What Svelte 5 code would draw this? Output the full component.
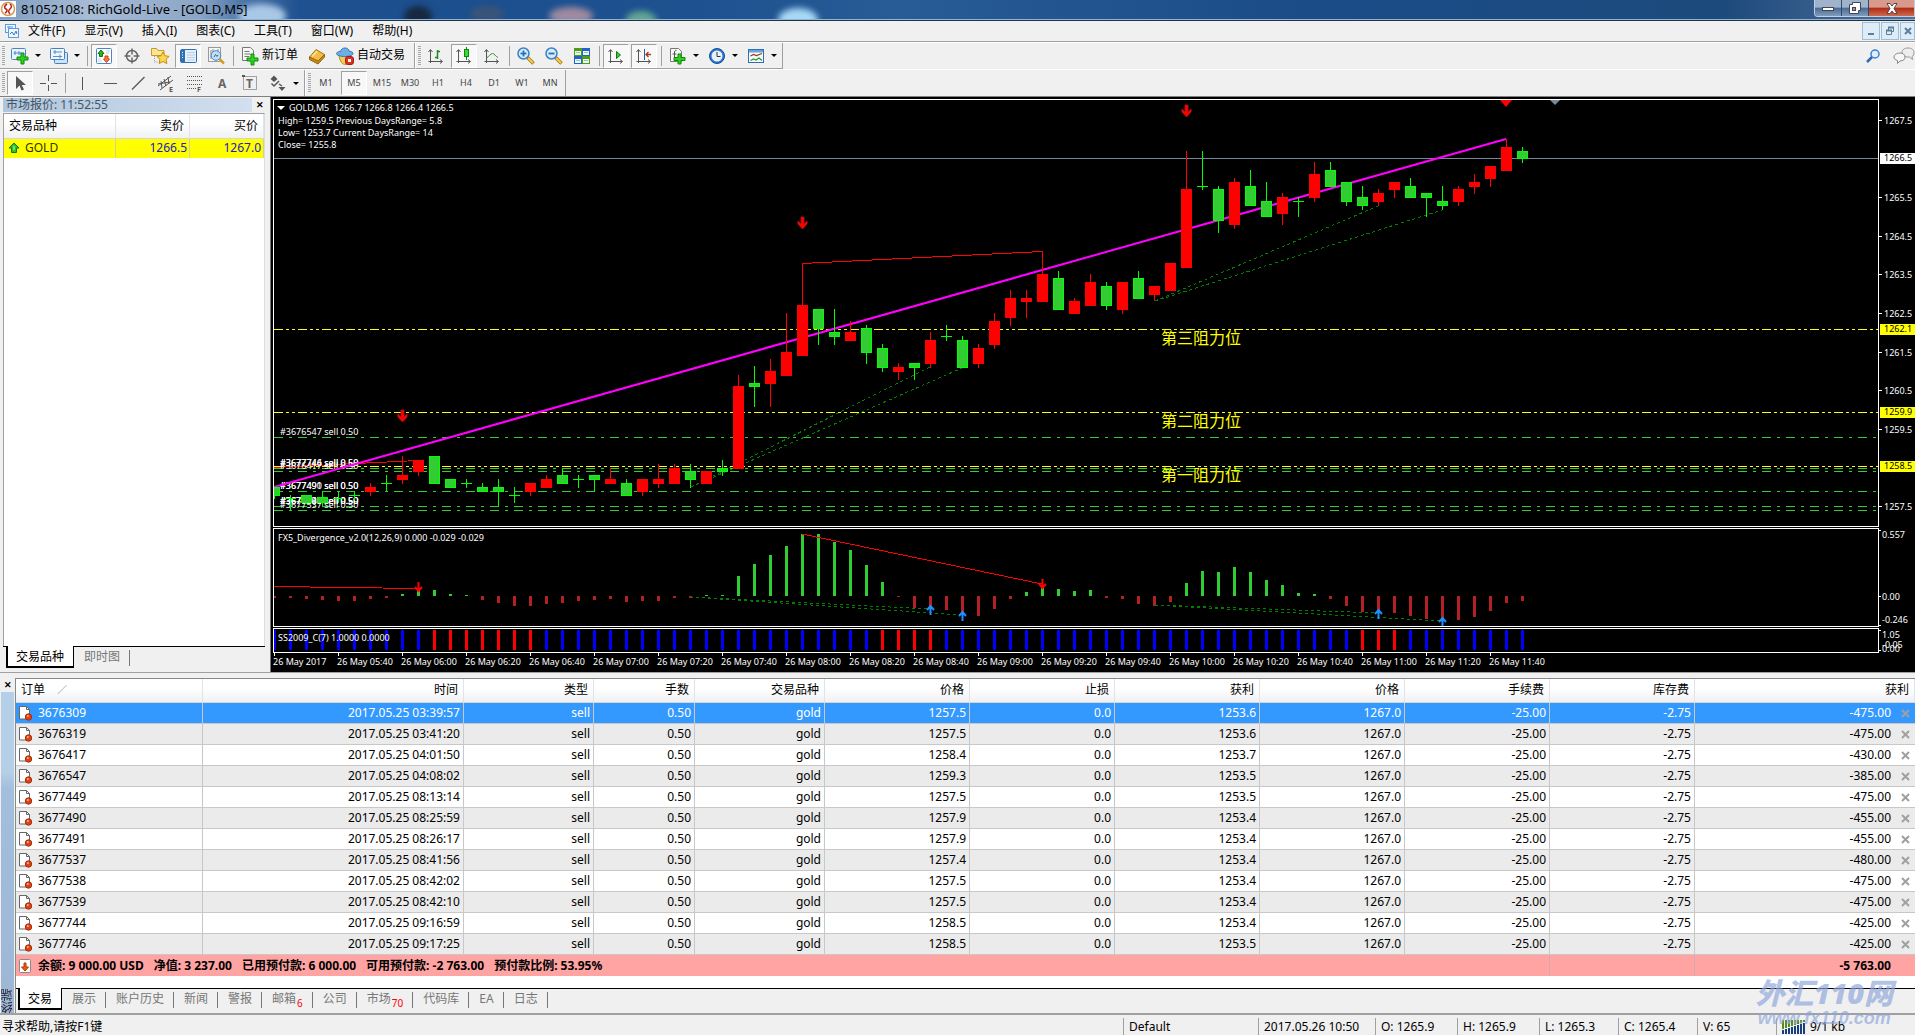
<script lang="ts">
  type Tool = { icon: string; label: string; pressed?: boolean; menu?: boolean; text?: string };

  const menus = ['文件(F)', '显示(V)', '插入(I)', '图表(C)', '工具(T)', '窗口(W)', '帮助(H)'];

  const standard: Tool[][] = [
    [
      { icon: 'newchart', label: '新图表', menu: true },
      { icon: 'profiles', label: '配置文件', menu: true },
    ],
    [
      { icon: 'watch', label: '市场报价', pressed: true },
      { icon: 'target', label: '数据窗口' },
      { icon: 'star', label: '收藏夹' },
      { icon: 'navigator', label: '导航', pressed: true },
      { icon: 'tester', label: '策略测试' },
    ],
    [
      { icon: 'order', label: '新订单', text: '新订单' },
      { icon: 'book', label: 'MetaEditor' },
      { icon: 'auto', label: '自动交易', text: '自动交易' },
    ],
  ];
  const charting: Tool[][] = [
    [
      { icon: 'bars', label: '柱状图' },
      { icon: 'candles', label: '阴阳烛', pressed: true },
      { icon: 'line', label: '折线图' },
    ],
    [
      { icon: 'zoomin', label: '放大' },
      { icon: 'zoomout', label: '缩小' },
      { icon: 'tile', label: '平铺窗口' },
    ],
    [
      { icon: 'scroll', label: '自动滚动', pressed: true },
      { icon: 'shift', label: '图表平移', pressed: true },
    ],
    [
      { icon: 'indicator', label: '技术指标', menu: true },
      { icon: 'clock', label: '时间周期', menu: true },
      { icon: 'template', label: '模板', menu: true },
    ],
  ];
  const drawing: Tool[][] = [
    [
      { icon: 'cursor', label: '光标', pressed: true },
      { icon: 'cross', label: '十字准线' },
    ],
    [
      { icon: 'vline', label: '垂直线' },
      { icon: 'hline', label: '水平线' },
      { icon: 'trend', label: '趋势线' },
      { icon: 'channel', label: '通道' },
      { icon: 'fibo', label: '斐波纳契' },
      { icon: 'text', label: '文字' },
      { icon: 'label', label: '文字标签' },
      { icon: 'arrows', label: '箭头', menu: true },
    ],
  ];
  const periods = ['M1', 'M5', 'M15', 'M30', 'H1', 'H4', 'D1', 'W1', 'MN'];

  // g = up colour / r = down colour; then high, low, body top, body bottom
  const candles: [string, number, number, number, number][] = [
    ['g', 487, 499, 487, 496], ['g', 495, 510, 498, 499], ['g', 495, 504, 495, 503], ['g', 491, 507, 497, 503],
    ['g', 491, 503, 498, 499], ['g', 491, 500, 495, 496], ['r', 483, 496, 487, 492], ['g', 475, 491, 483, 484],
    ['r', 456, 484, 475, 480], ['r', 460, 476, 460, 472], ['g', 456, 484, 456, 484], ['g', 479, 488, 479, 488],
    ['g', 479, 488, 483, 484], ['g', 483, 492, 487, 492], ['g', 479, 507, 487, 492], ['g', 487, 503, 495, 496],
    ['r', 483, 496, 483, 492], ['r', 475, 488, 479, 488], ['g', 468, 484, 475, 484], ['g', 475, 488, 479, 480],
    ['g', 475, 492, 475, 480], ['r', 468, 484, 479, 484], ['g', 479, 496, 483, 496], ['r', 479, 496, 479, 492],
    ['r', 464, 488, 479, 484], ['r', 464, 484, 468, 484], ['g', 464, 488, 471, 480], ['r', 471, 484, 471, 484],
    ['g', 460, 476, 468, 472], ['r', 375, 469, 386, 469], ['g', 366, 407, 383, 387], ['r', 359, 407, 371, 384],
    ['r', 313, 376, 352, 376], ['r', 263, 356, 305, 356], ['g', 309, 345, 309, 329], ['g', 309, 345, 332, 337],
    ['r', 321, 341, 332, 341], ['g', 325, 364, 328, 353], ['g', 344, 372, 348, 368], ['r', 363, 380, 367, 372],
    ['g', 363, 380, 363, 368], ['r', 332, 368, 340, 364], ['g', 325, 341, 336, 337], ['g', 336, 368, 340, 368],
    ['r', 344, 368, 348, 364], ['r', 313, 349, 321, 345], ['r', 290, 326, 298, 318], ['r', 290, 318, 298, 302],
    ['r', 251, 302, 274, 302], ['g', 271, 310, 278, 310], ['r', 298, 314, 301, 314], ['r', 274, 306, 282, 306],
    ['g', 282, 310, 286, 306], ['r', 282, 314, 282, 310], ['g', 271, 299, 278, 299], ['r', 286, 301, 286, 295],
    ['r', 263, 291, 263, 291], ['r', 151, 268, 189, 268], ['g', 151, 190, 186, 187], ['g', 186, 233, 189, 221],
    ['r', 178, 229, 182, 225], ['g', 170, 206, 186, 206], ['g', 182, 217, 201, 217], ['r', 193, 225, 197, 214],
    ['g', 197, 217, 201, 202], ['r', 162, 202, 174, 198], ['g', 162, 187, 170, 187], ['g', 182, 206, 182, 202],
    ['g', 186, 210, 197, 206], ['r', 189, 206, 193, 202], ['r', 182, 198, 182, 190], ['g', 178, 198, 186, 198],
    ['g', 193, 217, 193, 198], ['g', 186, 210, 201, 206], ['r', 186, 206, 189, 202], ['r', 174, 194, 182, 187],
    ['r', 166, 187, 166, 179], ['r', 139, 171, 147, 171], ['g', 147, 163, 151, 159],
  ];
  const histogram = [
    -2, -2, -3, -4, -5, -5, -3, -2, 2, 6, 6, 2, 1, -4, -7, -10, -10, -8, -7, -5, -4, -3, -6, -5, -5, -2, -2, 1, 1, 20,
    32, 41, 50, 62, 62, 54, 46, 31, 14, -1, -12, -13, -14, -17, -20, -13, -3, 4, 9, 7, 5, 6, -2, -3, -8, -10, -6, 13,
    25, 24, 29, 24, 16, 11, 3, 2, -3, -10, -16, -17, -17, -20, -23, -23, -24, -21, -15, -7, -5,
  ];
  const isRed = (i: number) => (i >= 10 && i <= 16) || (i >= 38 && i <= 41) || (i >= 68 && i <= 70);

  const resistances = [
    { y: 329, name: '第三阻力位' },
    { y: 412, name: '第二阻力位' },
    { y: 466, name: '第一阻力位' },
  ];
  const orderLines = [437, 468, 471, 491, 506, 510];
  const orderLabels: [number, string][] = [
    [437, '3676547'], [468, '3677744'], [468, '3677746'], [471, '3676417'], [491, '3677490'], [491, '3677491'],
    [506, '3676309'], [506, '3677449'], [506, '3677538'], [510, '3677537'],
  ];
  const prices = Array.from({ length: 11 }, (_, i) => ({ y: Math.round(120 + i * 38.6), v: (1267.5 - i).toFixed(1) }))
    .filter((p) => p.v !== '1266.5' && p.v !== '1258.5');
  const marks = [
    { y: 158, v: '1266.5', now: true },
    { y: 329, v: '1262.1', now: false },
    { y: 412, v: '1259.9', now: false },
    { y: 466, v: '1258.5', now: false },
  ];
  const times = Array.from({ length: 20 }, (_, k) => {
    if (k === 0) return '26 May 2017';
    const m = 340 + (k - 1) * 20;
    return `26 May ${String(Math.floor(m / 60)).padStart(2, '0')}:${String(m % 60).padStart(2, '0')}`;
  });

  const columns = ['时间', '类型', '手数', '交易品种', '价格', '止损', '获利', '价格', '手续费', '库存费'];
  const raw: [string, string, string, string, string][] = [
    ['3676309', '03:39:57', '1257.5', '1253.6', '-475.00'],
    ['3676319', '03:41:20', '1257.5', '1253.6', '-475.00'],
    ['3676417', '04:01:50', '1258.4', '1253.7', '-430.00'],
    ['3676547', '04:08:02', '1259.3', '1253.5', '-385.00'],
    ['3677449', '08:13:14', '1257.5', '1253.5', '-475.00'],
    ['3677490', '08:25:59', '1257.9', '1253.4', '-455.00'],
    ['3677491', '08:26:17', '1257.9', '1253.4', '-455.00'],
    ['3677537', '08:41:56', '1257.4', '1253.4', '-480.00'],
    ['3677538', '08:42:02', '1257.5', '1253.4', '-475.00'],
    ['3677539', '08:42:10', '1257.5', '1253.4', '-475.00'],
    ['3677744', '09:16:59', '1258.5', '1253.4', '-425.00'],
    ['3677746', '09:17:25', '1258.5', '1253.5', '-425.00'],
  ];
  const orders = raw.map(([id, t, open, tp, profit]) => ({
    id,
    profit,
    cells: [`2017.05.25 ${t}`, 'sell', '0.50', 'gold', open, '0.0', tp, '1267.0', '-25.00', '-2.75'],
  }));

  const tabs: { name: string; count?: string }[] = [
    { name: '交易' }, { name: '展示' }, { name: '账户历史' }, { name: '新闻' }, { name: '警报' },
    { name: '邮箱', count: '6' }, { name: '公司' }, { name: '市场', count: '70' }, { name: '代码库' },
    { name: 'EA' }, { name: '日志' },
  ];

  let selected = $state('3676309');
  let activeTab = $state('交易');
  let period = $state('M5');
</script>

{#snippet glyph(name: string)}
  <svg class="glyph" width="20" height="20" viewBox="0 0 20 20" aria-hidden="true">
    {#if name === 'newchart'}
      <rect x="1.500" y="2.500" width="14" height="11" rx="1" fill="#eaf4ff" stroke="#4a86c5" />
      <path d="M5 9V5M3.500 7h8M9 5v4" stroke="#4a86c5" fill="none" />
      <path d="M11 7h3v4h4v3h-4v4h-3v-4H7v-3h4z" fill="#2fd01f" stroke="#0c8a0c" />
    {:else if name === 'profiles'}
      <rect x="5.500" y="6.500" width="13" height="11" rx="1" fill="#cfe3f8" stroke="#4a7fb8" />
      <rect x="1.500" y="2.500" width="14" height="11" rx="1" fill="#eef6ff" stroke="#4a7fb8" />
      <path d="M4 6h9M6 4v4M4 10.500h9M11 8.500v4" stroke="#5a8fc8" fill="none" />
    {:else if name === 'watch'}
      <rect x="2.500" y="2.500" width="15" height="15" rx="1" fill="#fff" stroke="#4a86c5" />
      <path d="M7 4l3 3.500H8.500v3h-3v-3H4z" fill="#27b627" stroke="#0d7a0d" />
      <path d="M12.500 16.500l3-3.500H14v-3h-3v3H9.500z" fill="#ff7b3a" stroke="#d23c0c" />
      <path d="M12 5h4M12 7h3M4 13h3M4 15h4" stroke="#c3d5e8" />
    {:else if name === 'target'}
      <circle cx="10" cy="10" r="5.500" fill="none" stroke="#666" stroke-width="1.500" />
      <path d="M10 2.500v6M10 11.500v6M2.500 10h6M11.500 10h6" stroke="#666" stroke-width="1.500" />
    {:else if name === 'star'}
      <path d="M1.500 2.500h5l1.500 2h6v5H1.500z" fill="#fbe596" stroke="#c99a2a" />
      <path d="M4.500 10v6h4" fill="none" stroke="#999" stroke-dasharray="1 1" />
      <path d="M13 6l1.900 3.800 4.200.6-3 2.900.7 4.200-3.800-2-3.800 2 .7-4.200-3-2.900 4.200-.6z" fill="#ffd84a" stroke="#c68a12" />
    {:else if name === 'navigator'}
      <rect x="2.500" y="3.500" width="16" height="13" rx="1" fill="#e6f1fc" stroke="#2f6fb3" />
      <rect x="3" y="4" width="4" height="12" fill="#2f6fb3" />
      <path d="M9 6.500h8M9 9h8M9 11.500h8M9 14h8" stroke="#b8cfe8" />
      <path d="M4 6.500h1M4 9h1M4 11.500h1" stroke="#fff" />
    {:else if name === 'tester'}
      <rect x="2.500" y="1.500" width="12" height="14" fill="#f6f6f6" stroke="#999" />
      <path d="M5 4v9M12 3v7M7 3v3" stroke="#7a8794" />
      <circle cx="10" cy="9.500" r="4.800" fill="#b9dcf8" fill-opacity=".85" stroke="#4a86c5" />
      <path d="M8 11l1.500-2.500 1.500 2 1-1.500" fill="none" stroke="#467" />
      <path d="M13.500 13l4.500 4.500" stroke="#d99a1e" stroke-width="2.500" />
    {:else if name === 'order'}
      <path d="M2.500 1.500h8l3 3v10h-11z" fill="#f6f6f6" stroke="#777" />
      <path d="M4.500 5.500h5M4.500 8h6M4.500 10.500h5" stroke="#777" />
      <path d="M11 8h3v4h4v3h-4v4h-3v-4H7v-3h4z" fill="#2fd01f" stroke="#0c8a0c" />
    {:else if name === 'book'}
      <path d="M2.500 11L9 3.500l8.500 5-6.500 8.500z" fill="#f2bd45" stroke="#a8720f" />
      <path d="M2.500 11v2.500l8.500 4.500 6.500-7V8.500L11 15z" fill="#c98a1c" stroke="#94620a" />
      <path d="M5 10.500l5-5" stroke="#ffe7a5" stroke-width="1.500" />
    {:else if name === 'auto'}
      <path d="M4 9c1 8 4 9.500 6.500 9.500S15 14 15.500 9z" fill="#f3cc55" stroke="#b98a20" />
      <path d="M1.500 7.500C2 5.500 5 5.500 6 5c0-4 8-4 8 0 1 .5 4 .5 4 2.500 0 2-4.500 3-8.300 3S1.500 9.500 1.500 7.500z" fill="#6ab0e6" stroke="#3576b4" />
      <rect x="10.500" y="10.500" width="8" height="8" rx="2.500" fill="#dd3020" stroke="#a51c10" />
      <rect x="13" y="13" width="3" height="3" fill="#fff" />
    {:else if name === 'bars'}
      <path d="M4.500 17V4M2.500 6l2-2.500 2 2.500M2.500 15.500H16M14 13.500l2.500 2-2.500 2" fill="none" stroke="#555" />
      <path d="M11.500 4v9M9 11.500h2.500M11.500 5.500H14" fill="none" stroke="#1b8a1b" stroke-width="1.500" />
    {:else if name === 'candles'}
      <path d="M4.500 17V4M2.500 6l2-2.500 2 2.500M2.500 15.500H16M14 13.500l2.500 2-2.500 2" fill="none" stroke="#555" />
      <path d="M12.500 1v13" stroke="#1b7a1b" />
      <rect x="10.500" y="3.500" width="4" height="7" fill="#33dd33" stroke="#0c8a0c" />
    {:else if name === 'line'}
      <path d="M4.500 17V4M2.500 6l2-2.500 2 2.500M2.500 15.500H16M14 13.500l2.500 2-2.500 2" fill="none" stroke="#555" />
      <path d="M4.500 12c2-1 4-4.500 6-4.500s3 3 5.500 4" fill="none" stroke="#2a9a2a" />
    {:else if name === 'zoomin' || name === 'zoomout'}
      <path d="M11.500 11.500l6 6" stroke="#a87410" stroke-width="3.500" />
      <path d="M12 12l5 5" stroke="#f5cf4a" stroke-width="1.800" />
      <circle cx="7.500" cy="7.500" r="5.500" fill="#d5ebfb" stroke="#3a80c4" stroke-width="1.500" />
      <path d="M4.500 7.500h6" stroke="#2a6fb5" stroke-width="1.800" />
      {#if name === 'zoomin'}<path d="M7.500 4.500v6" stroke="#2a6fb5" stroke-width="1.800" />{/if}
    {:else if name === 'tile'}
      <rect x="2" y="2" width="8" height="8" fill="#4f9c1c" /><rect x="10" y="2" width="8" height="8" fill="#1f63c4" />
      <rect x="2" y="10" width="8" height="8" fill="#1f63c4" /><rect x="10" y="10" width="8" height="8" fill="#4f9c1c" />
      <path d="M3 5h6v4H3zM11 5h6v4h-6zM3 13h6v4H3zM11 13h6v4h-6z" fill="#eef5fb" />
      <path d="M4 6.500h4M12 6.500h4M4 14.500h4M12 14.500h4" stroke="#9cc3a0" />
    {:else if name === 'scroll'}
      <path d="M4.500 17V4M2.500 6l2-2.500 2 2.500M2.500 15.500H16M14 13.500l2.500 2-2.500 2" fill="none" stroke="#555" />
      <path d="M10.500 5.500v7l4-3.500z" fill="#33cc33" stroke="#0c7a0c" />
    {:else if name === 'shift'}
      <path d="M4.500 17V4M2.500 6l2-2.500 2 2.500M2.500 15.500H16M14 13.500l2.500 2-2.500 2" fill="none" stroke="#555" />
      <path d="M10.500 3v11" stroke="#2858a8" />
      <path d="M12 8.500h5M14.500 6L12 8.500l2.500 2.500" fill="none" stroke="#a83c10" stroke-width="1.300" />
    {:else if name === 'indicator'}
      <path d="M2.500 2.500h8l3 3v10h-11z" fill="#f8f8f8" stroke="#777" />
      <path d="M8.500 4.500c-2-.5-2 1-2 2.500v6M4.500 8h4" fill="none" stroke="#555" />
      <path d="M10 8h3v3.500h4v3h-4V18h-3v-3.500H6v-3h4z" fill="#2fd01f" stroke="#0c8a0c" />
    {:else if name === 'clock'}
      <circle cx="10" cy="10" r="7.500" fill="#2b73d0" stroke="#144d9c" />
      <circle cx="10" cy="10" r="5.500" fill="#e8f2fc" />
      <path d="M10 6v4.500h3.500" fill="none" stroke="#333" />
    {:else if name === 'template'}
      <rect x="2.500" y="3.500" width="15" height="13" fill="#f6fafe" stroke="#2f6fb3" />
      <rect x="3" y="4" width="14" height="2.500" fill="#6aa3dc" />
      <path d="M4.500 10l3-1.500 3 1 5.500-2" fill="none" stroke="#9a3c10" stroke-width="1.300" />
      <path d="M4.500 14.500l3-1.500 2.500 1 3-2 3 2.500" fill="none" stroke="#2a9a2a" stroke-width="1.300" />
    {:else if name === 'cursor'}
      <path d="M6 3v13l3.500-3.500 2 5 2.500-1-2.300-4.500H16z" fill="#555" />
    {:else if name === 'cross'}
      <path d="M10.500 2v6M10.500 12v6M2 10.500h6M13 10.500h6" stroke="#555" />
    {:else if name === 'vline'}
      <path d="M10.500 4v13" stroke="#555" />
    {:else if name === 'hline'}
      <path d="M4 10.500h13" stroke="#555" />
    {:else if name === 'trend'}
      <path d="M4 16.500L16.500 4" stroke="#555" stroke-width="1.200" />
    {:else if name === 'channel'}
      <path d="M2 13L15 3M4 17L17 7M5 8l1 7M8 6l2 7M12 4l1 7M2 11l12-2" fill="none" stroke="#555" />
      <text x="13" y="19" class="mini">E</text>
    {:else if name === 'fibo'}
      <path d="M3 3.500h15M3 7.500h15M3 11.500h15M3 15.500h9" stroke="#555" stroke-dasharray="1 1" />
      <text x="13" y="19" class="mini">F</text>
    {:else if name === 'text'}
      <text x="6" y="15" class="big">A</text>
    {:else if name === 'label'}
      <rect x="3.500" y="3.500" width="13" height="13" fill="none" stroke="#555" stroke-dasharray="1 1" />
      <path d="M2 3h3" stroke="#555" stroke-width="2" />
      <text x="6" y="15" class="big">T</text>
    {:else if name === 'arrows'}
      <path d="M6 2.500l3.500 3.500L6 9 2.500 6z M14 18l-3.500-4h7z" fill="#555" />
      <path d="M3.500 10.500l2.500 2.500 5-5M11 11l3 2" fill="none" stroke="#555" stroke-width="1.500" />
    {/if}
  </svg>
{/snippet}

{#snippet group(sets: Tool[][])}
  <span class="grip"></span>
  {#each sets as set, i}
    {#if i > 0}<span class="sep"></span>{/if}
    {#each set as t}
      <button class="tool" class:pressed={t.pressed} class:withtext={t.text} aria-label={t.label}>
        <span class="face">{@render glyph(t.icon)}</span>
        {#if t.text}<span class="caption">{t.text}</span>{/if}
        {#if t.menu}<span class="drop"></span>{/if}
      </button>
    {/each}
  {/each}
{/snippet}

{#snippet downArrow(x: number, y: number)}
  <path d="M{x - 1} {y}h3v7l3 -3v3l-4.500 5l-4.500 -5v-3l3 3z" fill="#ff0000" stroke="#b01010" stroke-width="1" />
{/snippet}

{#snippet smallArrow(x: number, y: number, up: boolean)}
  {#if up}
    <path d="M{x + 0.5} {y + 10}v-9M{x - 3} {y + 5}l3.500 -4l3.500 4" fill="none" stroke="#1e90ff" stroke-width="2" />
  {:else}
    <path d="M{x + 0.5} {y}v9M{x - 3} {y + 5}l3.500 4l3.500 -4" fill="none" stroke="#ff0000" stroke-width="2" />
  {/if}
{/snippet}

<div class="app">
  <header class="titlebar">
    <svg class="logo" width="16" height="16" viewBox="0 0 16 16" aria-hidden="true">
      <rect width="16" height="16" fill="#fff" />
      <circle cx="8" cy="8" r="6.500" fill="#fff" stroke="#d99a55" stroke-width="1.500" />
      <path d="M7 3c-3 2-3 4-1 5s1 3-1 4M10 3c2 2 2 3 0 5s-2 3 0 5" fill="none" stroke="#b8241c" stroke-width="1.600" />
    </svg>
    <h1>81052108: RichGold-Live - [GOLD,M5]</h1>
    <span class="blobs" aria-hidden="true"><i class="b0"></i><i class="b1"></i><i class="b2"></i><i class="b3"></i><i class="b4"></i><i class="b5"></i></span>
    <div class="winbtns">
      <button aria-label="最小化"><svg width="12" height="8" viewBox="0 0 12 8"><rect x=".5" y="3.500" width="11" height="3" fill="#fff" stroke="#445" /></svg></button>
      <button aria-label="还原"><svg width="12" height="12" viewBox="0 0 12 12"><path d="M3.500.5h8v8h-2v3h-9v-9h3z" fill="#fff" stroke="#445" /><rect x="3.500" y="5.500" width="3" height="3" fill="#89a" stroke="#445" /></svg></button>
      <button class="close" aria-label="关闭"><svg width="12" height="11" viewBox="0 0 12 11"><path d="M1 .5h3l2 2.500 2-2.500h3L8 5.500l3 5H8L6 8l-2 2.500H1l3-5z" fill="#fff" stroke="#544" /></svg></button>
    </div>
  </header>

  <nav class="menubar">
    <svg width="16" height="16" viewBox="0 0 16 16" aria-hidden="true">
      <rect x="1.500" y="1.500" width="10" height="8" fill="#eef6ff" stroke="#5b9be0" /><path d="M3 4h6M5 3v3" stroke="#5b9be0" />
      <rect x="4.500" y="5.500" width="10" height="9" fill="#eef6ff" stroke="#5b9be0" /><path d="M6 11l2-2 2 3 2-4 1 3" fill="none" stroke="#3f78c0" />
    </svg>
    {#each menus as m}<button>{m}</button>{/each}
    <div class="mdi">
      <button aria-label="最小化图表"><svg width="10" height="10"><path d="M2 8h6" stroke="#5d7d98" stroke-width="2" /></svg></button>
      <button aria-label="还原图表"><svg width="10" height="10"><path d="M3.500 4V1.500h5v4H7M1.500 4.500h5v4h-5z" fill="none" stroke="#5d7d98" /><path d="M1 4.500h6M3 1.500h6" stroke="#5d7d98" stroke-width="2" /></svg></button>
      <button aria-label="关闭图表"><svg width="10" height="10"><path d="M2 2l6 6M8 2L2 8" stroke="#5d7d98" stroke-width="2" /></svg></button>
    </div>
  </nav>

  <div class="toolrow">
    <div class="toolbar">{@render group(standard)}</div>
    <div class="toolbar second">{@render group(charting)}</div>
    <div class="right">
      <button aria-label="搜索"><svg width="16" height="16" viewBox="0 0 16 16"><circle cx="10" cy="6" r="4" fill="#dceeff" stroke="#3a80d0" stroke-width="1.500" /><path d="M7 9l-5 5" stroke="#2c68b8" stroke-width="2.500" /></svg></button>
      <button aria-label="聊天"><svg width="22" height="18" viewBox="0 0 22 18"><path d="M15 1c4 0 6 2 6 4.500S20 9 19 9.500l.5 3-3-2.500C12 10.500 9 8 9 5.500S11 1 15 1z" fill="#eee" stroke="#999" /><path d="M7 6c3 0 5 1.500 5 4s-2 4-5 4l-2.500 2.500v-3C2 13 1 11.500 1 10c0-2.500 3-4 6-4z" fill="#f6f6f6" stroke="#888" /></svg></button>
    </div>
  </div>
  <div class="toolrow">
    <div class="toolbar">{@render group(drawing)}</div>
    <div class="toolbar second">
      <span class="grip"></span>
      {#each periods as p}
        <button class="tool period" class:pressed={period === p} onclick={() => (period = p)}><span class="face">{p}</span></button>
      {/each}
    </div>
  </div>

  <main class="workspace">
    <section class="market">
      <div class="caption-row"><h2>市场报价: 11:52:55</h2><button aria-label="关闭市场报价">✕</button></div>
      <div class="quotes">
        <table>
          <colgroup><col /><col class="q" /><col class="q" /></colgroup>
          <thead><tr><th>交易品种</th><th>卖价</th><th>买价</th></tr></thead>
          <tbody>
            <tr>
              <td>
                <svg width="12" height="12" viewBox="0 0 12 12" aria-hidden="true"><path d="M6 1l5 5H8.500v4.500h-5V6H1z" fill="#2fc02f" stroke="#0b7a0b" /><path d="M6 4v4" stroke="#c8f5c8" /></svg>GOLD
              </td>
              <td class="num">1266.5</td><td class="num">1267.0</td>
            </tr>
          </tbody>
        </table>
      </div>
      <div class="tabs mtabs"><button class="active">交易品种</button><button>即时图</button></div>
    </section>

    <section class="chart">
      <div class="pane">
        <svg class="plot" height="426">
          <g transform="translate(-274 -100)">
            <g class="thin">
              <line class="now" x1="274" x2="4000" y1="158.5" y2="158.5" />
              {#each orderLines as y}<line class="ord" x1="274" x2="4000" y1={y + 0.5} y2={y + 0.5} />{/each}
              {#each resistances as r}<line class="res" x1="274" x2="4000" y1={r.y + 0.5} y2={r.y + 0.5} />{/each}
              <path class="div" d="M274 467.500L418 460.500M802.500 263.500L1042.500 251.500" />
              <path class="hidden-div" d="M691 487L930 367M691 487L962 368M1155 301L1378 206M1155 301L1442 210" />
            </g>
            {#each orderLabels as [y, id]}<text x="280" y={y - 2} class="small">#{id} sell 0.50</text>{/each}
            <path class="trendline" d="M274 487L1506 139" />
            <g class="thin">
              {#each candles as [c, h, l, t, b], i}
                {@const x = 274 + i * 16}
                <rect class={c} {x} y={h} width="1" height={l - h} />
                <rect class={c} x={x - 5} y={t} width="11" height={b - t} />
                {#if c === 'g' && b - t > 3}<rect class="fill" x={x - 4} y={t + 1} width="9" height={b - t - 2} />{/if}
              {/each}
            </g>
            {@render downArrow(402, 410)}
            {@render downArrow(802, 217)}
            {@render downArrow(1186, 105)}
            <path d="M1500 100h12l-6 7z" fill="#ff0000" />
            <path d="M1550 100h10l-5 5z" fill="#778899" />
            {#each resistances as r}<text x="1161" y={r.y + 15} class="level">{r.name}</text>{/each}
            <path d="M277 106h8l-4 4z" fill="#fff" />
            <text x="289" y="111" class="small" xml:space="preserve">GOLD,M5  1266.7 1266.8 1266.4 1266.5</text>
            <text x="278" y="124" class="small">High= 1259.5 Previous DaysRange= 5.8</text>
            <text x="278" y="136" class="small">Low= 1253.7 Current DaysRange= 14</text>
            <text x="278" y="148" class="small">Close= 1255.8</text>
          </g>
        </svg>
        <svg class="axis" height="428">
          <g transform="translate(-1879 -99)">
            {#each prices as p}
              <rect x="1879" y={p.y} width="3" height="1" fill="#fff" />
              <text x="1884" y={p.y + 4} class="small">{p.v}</text>
            {/each}
            {#each marks as m}
              <rect x="1880" y={m.y - 5} width="35" height="11" class:nowbox={m.now} class:markbox={!m.now} />
              <text x="1884" y={m.y + 3} class="small dark">{m.v}</text>
            {/each}
          </g>
        </svg>
      </div>
      <div class="pane">
        <svg class="plot" height="97">
          <g transform="translate(-274 -529)">
            {#each histogram as v, i}
              <rect x={273 + i * 16} y={v > 0 ? 596 - v : 596} width="3" height={Math.abs(v)} class:pos={v > 0} class:neg={v < 0} />
            {/each}
            <g class="thin">
              <path class="div" d="M274 586.500L418 588.500M802 534L1042 584" />
              <path class="hidden-div" d="M690 597L930 609M690 597L962 615M1155 605L1378 613M1155 605L1442 621" />
            </g>
            {@render smallArrow(418, 582, false)}
            {@render smallArrow(1042, 579, false)}
            {@render smallArrow(930, 605, true)}
            {@render smallArrow(962, 611, true)}
            {@render smallArrow(1378, 609, true)}
            {@render smallArrow(1442, 617, true)}
            <text x="278" y="541" class="small">FX5_Divergence_v2.0(12,26,9) 0.000 -0.029 -0.029</text>
          </g>
        </svg>
        <svg class="axis" height="99">
          <g transform="translate(-1879 -528)">
            <path d="M1879 530.500h2M1879 596.500h2M1879 625.500h2" stroke="#fff" />
            <text x="1882" y="538" class="small">0.557</text>
            <text x="1882" y="600" class="small">0.00</text>
            <text x="1882" y="623" class="small">-0.246</text>
          </g>
        </svg>
      </div>
      <div class="pane">
        <svg class="plot" height="23">
          <g transform="translate(-274 -629)">
            {#each candles as _, i}<rect x={273 + i * 16} y="630" width="3" height="20" class:sig={isRed(i)} class:base={!isRed(i)} />{/each}
            <text x="278" y="641" class="small">SS2009_C(7) 1.0000 0.0000</text>
          </g>
        </svg>
        <svg class="axis" height="25">
          <g transform="translate(-1879 -628)">
            <path d="M1879 630.500h2M1879 650.500h2" stroke="#fff" />
            <text x="1882" y="638" class="small">1.05</text>
            <text x="1882" y="648" class="small">-0.05</text>
            <text x="1882" y="652" class="small">0.00</text>
          </g>
        </svg>
      </div>
      <svg class="timeaxis" height="19">
        {#each times as t, k}
          <rect x={k * 64 + 1} y="0" width="1" height="3" fill="#fff" />
          <text x={k * 64} y="12" class="small">{t}</text>
        {/each}
      </svg>
    </section>
  </main>

  <section class="terminal">
    <aside>
      <button aria-label="关闭终端">✕</button>
      <div class="strip"><span>终端</span></div>
    </aside>
    <div class="tbody">
      <table>
        <colgroup>
          <col class="c1" /><col class="c2" /><col class="c3" /><col class="c4" /><col class="c3" /><col class="c5" /><col class="c5" />
          <col class="c5" /><col class="c5" /><col class="c5" /><col class="c5" /><col />
        </colgroup>
        <thead>
          <tr>
            <th>订单<span class="sort">∕</span></th>
            {#each columns as c}<th>{c}</th>{/each}
            <th>获利</th>
          </tr>
        </thead>
        <tbody>
          {#each orders as o}
            <tr class:sel={selected === o.id} onclick={() => (selected = o.id)}>
              <td>
                <svg width="15" height="16" viewBox="0 0 15 16" aria-hidden="true"><path d="M1.500 1.500h7l3 3v9.500h-10z" fill="#fff" stroke="#666" /><path d="M8.500 1.500v3h3" fill="none" stroke="#666" /><circle cx="10.500" cy="12" r="3.200" fill="#dd4414" stroke="#a82c08" /><circle cx="9.800" cy="11" r="1" fill="#ffb090" /></svg>{o.id}
              </td>
              {#each o.cells as c}<td>{c}</td>{/each}
              <td>{o.profit}<button aria-label="平仓 {o.id}"><svg width="9" height="9" viewBox="0 0 9 9"><path d="M1 1l7 7M8 1L1 8" stroke="#a0a0a0" stroke-width="2" /></svg></button></td>
            </tr>
          {/each}
          <tr class="sum">
            <td colspan="10">
              <svg width="15" height="16" viewBox="0 0 15 16" aria-hidden="true"><rect x="1.500" y="1.500" width="11" height="13" rx="1" fill="#fff" stroke="#888" /><path d="M7 13L3.500 9H6V5h2v4h2.500z" fill="#ee5a1c" stroke="#b03808" /></svg><span>余额: 9 000.00 USD</span><span>净值: 3 237.00</span><span>已用预付款: 6 000.00</span><span>可用预付款: -2 763.00</span><span>预付款比例: 53.95%</span>
            </td>
            <td></td>
            <td>-5 763.00</td>
          </tr>
        </tbody>
      </table>
      <div class="filler"></div>
      <div class="tabs">
        {#each tabs as t}
          <button class:active={activeTab === t.name} onclick={() => (activeTab = t.name)}>{t.name}{#if t.count}<sub>{t.count}</sub>{/if}</button>
        {/each}
      </div>
    </div>
  </section>

  <footer class="status">
    <span class="help">寻求帮助,请按F1键</span>
    <span class="s1">Default</span>
    <span class="s2">2017.05.26 10:50</span>
    <span class="wide">O: 1265.9</span>
    <span class="wide">H: 1265.9</span>
    <span class="s3">L: 1265.3</span>
    <span class="s3">C: 1265.4</span>
    <span class="s3">V: 65</span>
    <span class="s4">
      <svg width="24" height="14" viewBox="0 0 24 14" aria-hidden="true">
        {#each [0, 1, 2, 3, 4, 5, 6, 7] as i}
          <rect x={i * 3} y="0" width="2" height={9 - i} fill="#5a8a1c" /><rect x={i * 3} y={10 - i} width="2" height={4 + i} fill="#163f7c" />
        {/each}
      </svg>9/1 kb
    </span>
  </footer>
  <div class="watermark"><b>外汇110网</b><i>www.fx110.com</i></div>
</div>

<style>
  :global(body) { margin: 0; background: #f0f0f0; }
  .app {
    position: relative; display: flex; flex-direction: column; min-height: 100vh; overflow: hidden;
    font: 12px/16px 'Noto Sans', 'Noto Sans CJK SC', sans-serif; color: #000; background: #f0f0f0;
  }
  button { font: inherit; color: inherit; background: none; border: 0; padding: 0; margin: 0; }
  svg { display: block; flex: none; }
  h1, h2 { margin: 0; font: inherit; font-weight: 400; }

  .titlebar {
    position: relative; display: flex; align-items: center; height: 18px; overflow: hidden;
    border-bottom: 1px solid #8fb4d8; padding-bottom: 1px;
    background: linear-gradient(90deg, #7f9cc0 0, #a9bcd6 90px, #8ba5c6 200px, #5078a8 240px, #1f5090 300px, #1c4f8e 420px, #1d5190 700px, #285c96 900px, #1b4c88 1300px, #1c4a7c 90%, #50709a 100%);
  }
  .logo { z-index: 1; }
  .titlebar h1 { z-index: 1; margin-left: 5px; font-size: 13px; }
  .blobs i { position: absolute; border-radius: 50%; filter: blur(3px); }
  .b0 { left: 238px; top: 4px; width: 48px; height: 24px; background: #a9c8e6; }
  .b1 { left: 404px; top: 6px; width: 28px; height: 22px; background: #17283f; }
  .b2 { left: 470px; top: 6px; width: 34px; height: 16px; background: #3a5478; }
  .b3 { left: 549px; top: 7px; width: 44px; height: 18px; background: #a08aa0; }
  .b4 { left: 625px; top: 11px; width: 32px; height: 22px; background: #62a890; }
  .b5 { left: 778px; top: 8px; width: 40px; height: 24px; background: #a8d8f4; }
  .winbtns { display: flex; margin-left: auto; height: 16px; align-self: flex-start; border: 1px solid #c0cede; border-top: 0; border-radius: 0 0 0 4px; overflow: hidden; z-index: 1; }
  .winbtns button { display: grid; place-items: center; width: 27px; border-right: 1px solid #2f4a6c; background: linear-gradient(#9fb4cc 0 45%, #4a6a92 50%, #7f9cbe); }
  .winbtns .close { width: 45px; border: 0; background: linear-gradient(#d89a8c 0 45%, #b02a12 50%, #cc6a50); }

  .menubar { display: flex; align-items: center; height: 20px; padding-left: 4px; border-top: 1px solid #234; border-bottom: 1px solid #a0a0a0; }
  .menubar > button { margin-left: 19px; }
  .menubar > svg + button { margin-left: 8px; }
  .mdi { display: flex; gap: 1px; margin-left: auto; }
  .mdi button { display: grid; place-items: center; width: 18px; height: 18px; box-sizing: border-box; border: 1px solid #a4bcd2; background: #dcecf8; }
  .mdi button:last-child { width: 15px; }

  .toolrow { display: flex; height: 26px; border-top: 1px solid #fff; }
  .toolbar { display: flex; align-items: center; border-bottom: 1px solid #a0a0a0; border-right: 1px solid #a0a0a0; padding-right: 1px; }
  .toolrow:nth-of-type(2) .toolbar { border-bottom: 0; }
  .second { border-left: 1px solid #fff; }
  .grip { width: 3px; height: 20px; margin: 0 1px 0 2px; background: repeating-linear-gradient(#a8a8a8 0 1px, transparent 1px 2px); }
  .sep { width: 1px; height: 20px; margin: 0 2px 0 3px; background: #a0a0a0; }
  .tool { display: flex; align-items: center; }
  .withtext:last-child { margin-right: 3px; }
  .face { display: grid; place-items: center; width: 26px; height: 22px; border: 1px solid transparent; }
  .pressed .face { border-color: #a0a0a0 #fff #fff #a0a0a0; background: #f8f8f8; width: 24px; margin: 0 1px; }
  .drop { width: 0; height: 0; margin: 0 4px 0 1px; border: 3px solid transparent; border-top-color: #000; border-bottom: 0; }
  .caption { margin: 0 5px 2px -2px; }
  .period { font-size: 9px; color: #444; }
  .mini { font: 700 7px 'Noto Sans', sans-serif; fill: #555; }
  .big { font: 700 12px 'Noto Sans', sans-serif; fill: #666; }
  .right { display: flex; align-items: center; gap: 12px; margin-left: auto; }

  .workspace { display: flex; border-top: 1px solid #808080; border-bottom: 1px solid #a0a0a0; }
  .market { display: flex; flex-direction: column; width: 266px; flex: none; padding: 1px 1px 1px 3px; box-sizing: border-box; }
  .caption-row { display: flex; height: 14px; line-height: 14px; color: #445566; margin-bottom: 1px; }
  .caption-row h2 { flex: 1; padding-left: 3px; margin-right: 3px; background: linear-gradient(90deg, #b0c6dc, #d2dfef); }
  .caption-row button { width: 10px; font-size: 9px; font-weight: 700; color: #000; }
  .quotes { flex: 1; background: #fff; border: 1px solid #a0a0a0; border-right-color: #ddd; border-bottom: 0; }
  .quotes table { width: 100%; border-collapse: collapse; table-layout: fixed; }
  .q { width: 74px; }
  .quotes th { height: 24px; }
  th { font-weight: 400; text-align: right; padding: 0 5px; background: linear-gradient(#fff 40%, #f0f1f4); border-right: 1px solid #e0e3e8; border-bottom: 1px solid #d5d5d5; box-sizing: border-box; white-space: nowrap; }
  th:first-child { text-align: left; }
  .quotes td { height: 20px; padding: 0 4px; background: #ff0; border-right: 1px solid #d0d0a0; box-sizing: border-box; border-top: 1px solid #e8e8c0; color: #333300; }
  .quotes td svg { display: inline-block; vertical-align: -2px; margin-right: 5px; }
  .quotes .num { text-align: right; color: #2020c0; padding: 0 2px; }
  .tabs { display: flex; height: 25px; padding-left: 2px; border-top: 1px solid #000; box-sizing: border-box; background: #f0f0f0; }
  .mtabs { padding-left: 3px; }
  .tabs button { height: 16px; margin-top: 3px; padding: 0 9px 2px 10px; border-right: 1px solid #777; color: #777; line-height: 14px; white-space: nowrap; box-sizing: border-box; }
  .tabs .active { height: 22px; margin-top: -1px; padding: 2px 9px 0 8px; border: solid #000; border-width: 0 1px 2px 2px; background: #fff; color: #000; }
  sub { color: #f00; font-size: 10px; vertical-align: -4px; line-height: 1; margin-left: 1px; }

  .chart { flex: 1; min-width: 0; margin-left: 4px; padding: 2px 0 0 2px; border-left: 1px solid #777; background: #000; }
  .pane { display: flex; margin-bottom: 1px; }
  .plot { flex: 1; min-width: 0; border: 1px solid #fff; overflow: hidden; }
  .axis { width: 36px; overflow: hidden; }
  .pane:nth-child(3) { margin-bottom: 0; }
  .timeaxis { width: 100%; }
  .thin { shape-rendering: crispEdges; }
  .small { font: 9px 'Noto Sans', sans-serif; fill: #fff; }
  .dark { fill: #000; }
  .level { font: 16px 'Noto Sans CJK SC', sans-serif; fill: #ff0; }
  .now { stroke: #778899; }
  .res { stroke: #ff0; stroke-dasharray: 9 3 3 3 3 3; }
  .ord { stroke: #32cd32; stroke-dasharray: 9 6 3 6; }
  .div { stroke: #f00; fill: none; }
  .hidden-div { stroke: #008000; fill: none; stroke-dasharray: 3 3; }
  .trendline { stroke: #f0f; stroke-width: 2; fill: none; }
  .r, .sig { fill: #f00; }
  .g { fill: #0f0; }
  .fill, .pos { fill: #32cd32; }
  .neg { fill: #b22222; }
  .base { fill: #00f; }
  .nowbox { fill: #fff; }
  .markbox { fill: #ff0; }

  .terminal { display: flex; flex: 1; margin-top: 5px; }
  aside { display: flex; flex-direction: column; width: 15px; flex: none; }
  aside button { height: 14px; font-size: 9px; font-weight: 700; line-height: 12px; }
  .strip { flex: 1; margin: 0 1px; display: flex; align-items: flex-end; background: linear-gradient(#b5cfe8 0 25%, #a3bfdc 30%, #9db6d4); }
  .strip span { writing-mode: vertical-rl; transform: rotate(180deg); line-height: 13px; color: #223; }
  .tbody { display: flex; flex-direction: column; flex: 1; min-width: 0; border-left: 1px solid #888; border-top: 1px solid #888; background: #fff; }
  .terminal table { width: 100%; border-collapse: separate; border-spacing: 0; table-layout: fixed; }
  .c1 { width: 187px; }
  .c2 { width: 261px; }
  .c3 { width: 130px; }
  .c4 { width: 101px; }
  .c5 { width: 145px; }
  .terminal th { height: 24px; padding-bottom: 2px; }
  .sort { margin-left: 12px; color: #777; font-size: 10px; }
  .terminal td { height: 21px; padding: 0 3px; text-align: right; box-sizing: border-box; border-right: 1px solid #c8c8c8; border-bottom: 1px solid #c8c8c8; white-space: nowrap; line-height: 16px; }
  .terminal td:first-child { text-align: left; padding-left: 2px; }
  .terminal td svg { display: inline-block; vertical-align: -4px; margin-right: 5px; }
  .terminal tbody tr:nth-child(even) td { background: #ebebeb; }
  .terminal tbody tr.sel td { background: #39f; color: #fff; }
  .terminal td:last-child { border-right: 0; padding-right: 4px; }
  .terminal td button { width: 12px; margin-left: 8px; line-height: 12px; }
  .terminal td button svg { margin: 0; vertical-align: -1px; }
  .terminal tbody tr.sum td { background: #ffa3a3; border-right-color: #d8a8a8; border-bottom: 0; font-weight: 700; }
  .terminal tbody tr.sum td:last-child { padding-right: 24px; }
  .sum span { margin-right: 10px; }
  .filler { flex: 1; min-height: 11px; }

  .status { display: flex; height: 22px; border-top: 2px solid #a0a0a0; box-sizing: border-box; background: #f0f0f0; white-space: nowrap; overflow: hidden; }
  .status span { box-sizing: border-box; padding-left: 5px; border-left: 1px solid #a0a0a0; margin-top: 3px; line-height: 18px; }
  .status .help { flex: 1; padding-left: 2px; border: 0; }
  .s1 { width: 135px; }
  .s2 { width: 117px; }
  .s3 { width: 79px; }
  .wide { width: 82px; }
  .s4 { display: flex; align-items: center; gap: 4px; width: 139px; }
  .watermark { position: absolute; right: 22px; bottom: 7px; display: flex; flex-direction: column; align-items: center; color: #8fa8dcb0; font-style: italic; pointer-events: none; }
  .watermark b { font: italic 900 29px/30px 'Noto Sans', 'Noto Sans CJK SC', sans-serif; }
  .watermark i { font: italic 700 18px/20px 'Liberation Sans', sans-serif; }
</style>
